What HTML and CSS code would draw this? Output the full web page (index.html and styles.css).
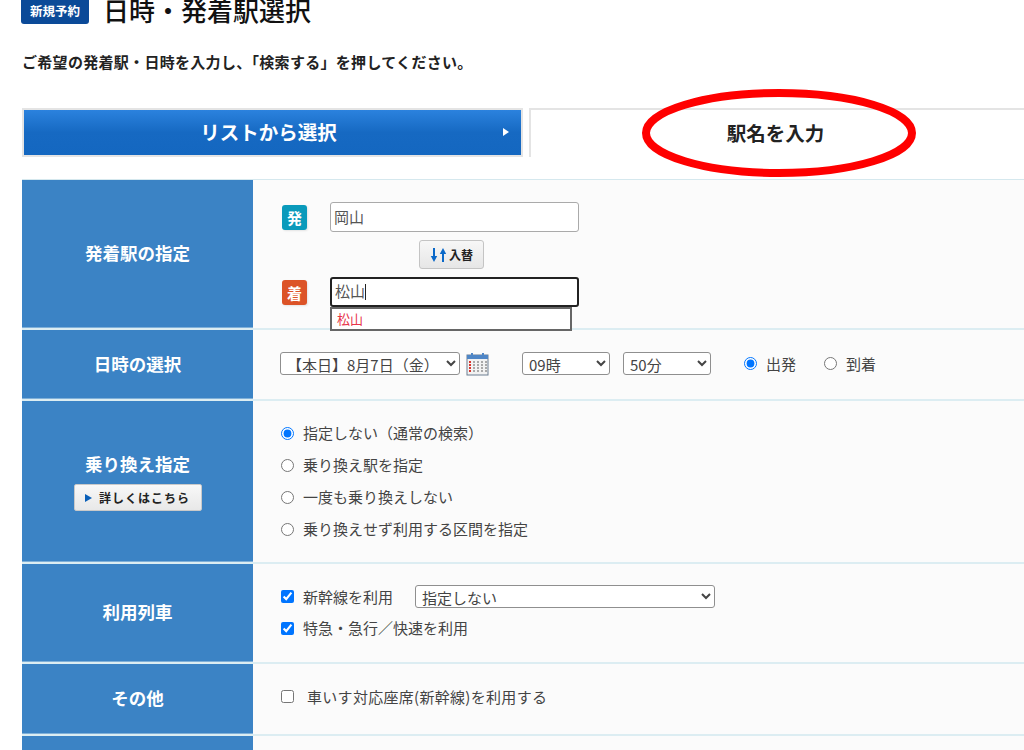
FILE: index.html
```html
<!DOCTYPE html>
<html lang="ja">
  <head>
    <meta charset="UTF-8" />
    <meta name="viewport" content="width=device-width, initial-scale=1.0" />
    <title>日時・発着駅選択</title>
    <link rel="stylesheet" href="styles.css">
  </head>
  <body>
    <div class="page">
      <div class="heading">
        <span class="badge">新規予約</span>
        <h1>日時・発着駅選択</h1>
      </div>
      <p class="lead">ご希望の発着駅・日時を入力し、「検索する」を押してください。</p>

      <div class="tabs">
        <div class="tab tab-list">リストから選択<span class="tab-arrow"></span></div>
        <div class="tab tab-name">駅名を入力</div>
      </div>

      <div class="form">
        <div class="row row-station">
          <div class="label">発着駅の指定</div>
          <div class="cell station">
            <div class="station-line">
              <span class="mark mark-dep">発</span>
              <input class="station-input" type="text" value="岡山">
            </div>
            <button class="swap" type="button">
              <svg width="18" height="16" viewBox="0 0 18 16"><path d="M4 1v9M13 15V6" stroke="#0a68c8" stroke-width="2"/><path d="M.8 9h6.400L4 15zM9.800 7h6.400L13 1z" fill="#0a68c8"/></svg>
              入替
            </button>
            <div class="station-line station-line-arr">
              <span class="mark mark-arr">着</span>
              <div class="suggest-wrap">
                <div class="station-input is-focus">松山<span class="caret"></span></div>
                <div class="suggest">松山</div>
              </div>
            </div>
          </div>
        </div>

        <div class="row row-date">
          <div class="label">日時の選択</div>
          <div class="cell date">
            <select class="select select-day"><option>【本日】8月7日（金）</option></select>
            <svg class="calendar" width="24" height="24" viewBox="0 0 24 24">
              <rect x="1" y="3" width="21" height="20" fill="#f2f2f2" stroke="#6d7f92"/>
              <rect x="1" y="3" width="21" height="4" fill="#4f86c6"/>
              <path d="M6 1v4M17 1v4" stroke="#4f86c6" stroke-width="2"/>
              <path d="M4 9v12M8 9v12M12 9v12M16 9v12M20 9v12" stroke="#a9a9a9" stroke-width="2" stroke-dasharray="2 1"/>
              <path d="M4 9v12" stroke="#d9342b" stroke-width="2" stroke-dasharray="2 1"/>
            </svg>
            <select class="select select-time"><option>09時</option></select>
            <select class="select select-time select-min"><option>50分</option></select>
            <label class="choice choice-dep"><input type="radio" name="kind" checked>出発</label>
            <label class="choice choice-arr"><input type="radio" name="kind">到着</label>
          </div>
        </div>

        <div class="row row-transfer">
          <div class="label label-transfer">
            乗り換え指定
            <button class="more" type="button"><span class="more-arrow"></span>詳しくはこちら</button>
          </div>
          <div class="cell options">
            <label class="choice"><input type="radio" name="transfer" checked>指定しない（通常の検索）</label>
            <label class="choice"><input type="radio" name="transfer">乗り換え駅を指定</label>
            <label class="choice"><input type="radio" name="transfer">一度も乗り換えしない</label>
            <label class="choice"><input type="radio" name="transfer">乗り換えせず利用する区間を指定</label>
          </div>
        </div>

        <div class="row row-train">
          <div class="label">利用列車</div>
          <div class="cell trains">
            <div class="train-line">
              <label class="choice"><input type="checkbox" checked>新幹線を利用</label>
              <select class="select select-train"><option>指定しない</option></select>
            </div>
            <label class="choice"><input type="checkbox" checked>特急・急行／快速を利用</label>
          </div>
        </div>

        <div class="row row-other">
          <div class="label">その他</div>
          <div class="cell other">
            <label class="choice choice-wide"><input type="checkbox">車いす対応座席(新幹線)を利用する</label>
          </div>
        </div>

        <div class="row row-last">
          <div class="label"></div>
          <div class="cell"></div>
        </div>
      </div>

      <svg class="circle" width="290" height="100" viewBox="0 0 290 100">
        <ellipse cx="145" cy="50" rx="133" ry="40" fill="none" stroke="#ff0000" stroke-width="8"/>
      </svg>
    </div>
  </body>
</html>
```

FILE: styles.css
```css
html,
body {
  margin: 0;
  height: 750px;
  overflow: hidden;
  background-color: #ffffff;
}
body {
  font-family: "Noto Sans CJK JP", "Liberation Sans", sans-serif;
  color: #333333;
}
.page {
  position: relative;
  width: 1024px;
  height: 750px;
  overflow: hidden;
  padding-left: 22px;
  box-sizing: border-box;
}

/* heading */
.heading {
  display: flex;
  align-items: center;
  height: 24px;
  margin-top: -1px;
}
.badge {
  display: flex;
  align-items: center;
  justify-content: center;
  width: 68px;
  height: 27px;
  margin-top: -1px;
  margin-left: -1px;
  background-color: #0b4a98;
  border-radius: 3px;
  color: #ffffff;
  font-size: 12.500px;
  font-weight: 700;
}
h1 {
  margin: -3px 0 0 14px;
  font-size: 26px;
  line-height: 28px;
  font-weight: 500;
  color: #111111;
}
.lead {
  margin: 29px 0 0 0;
  font-size: 15px;
  line-height: 20px;
  font-weight: 700;
  letter-spacing: 0.300px;
  color: #222222;
}

/* tabs */
.tabs {
  display: flex;
  margin-top: 36px;
  gap: 6px;
  width: 1100px;
}
.tab {
  display: flex;
  align-items: center;
  justify-content: center;
  box-sizing: border-box;
  height: 49px;
  padding-bottom: 3px;
  font-size: 19.500px;
  font-weight: 700;
}
.tab-list {
  position: relative;
  width: 501px;
  padding-right: 8px;
  background: linear-gradient(#2b82de, #1669c2 50%, #1467c0);
  border: 2px solid #e4e4e4;
  color: #ffffff;
}
.tab-arrow {
  position: absolute;
  right: 12px;
  top: 18px;
  border-left: 6px solid #ffffff;
  border-top: 4px solid transparent;
  border-bottom: 4px solid transparent;
}
.tab-name {
  flex: 1;
  padding-right: 102px;
  border-top: 2px solid #e4e4e4;
  border-left: 2px solid #e4e4e4;
  color: #222222;
}

/* form rows */
.form {
  margin-top: 22px;
  width: 1100px;
  border-top: 1px solid #d5e8ee;
}
.row {
  display: flex;
  border-bottom: 2px solid #dcedf2;
}
.label {
  display: flex;
  flex-direction: column;
  align-items: center;
  justify-content: center;
  box-sizing: border-box;
  width: 231px;
  flex-shrink: 0;
  padding-bottom: 3px;
  background-color: #3b83c5;
  box-shadow: inset 0 -1px 0 #7fb0d9;
  color: #ffffff;
  font-size: 17.500px;
  font-weight: 700;
}
.label-transfer {
  padding-bottom: 1px;
}
.cell {
  flex: 1;
  background-color: #fbfbfb;
  font-size: 15px;
  color: #444444;
}
.row-station { height: 148px; }
.row-date { height: 69px; }
.row-transfer { height: 161px; }
.row-train { height: 98px; }
.row-other { height: 70px; }
.row-last { height: 60px; }

/* station */
.station {
  position: relative;
  padding: 22px 0 0 29px;
}
.station-line {
  display: flex;
  align-items: center;
}
.station-line-arr {
  margin-top: 8px;
}
.mark {
  display: flex;
  align-items: center;
  justify-content: center;
  width: 25px;
  height: 25px;
  margin-right: 23px;
  border-radius: 3px;
  color: #ffffff;
  font-size: 15px;
  font-weight: 700;
  box-shadow: 1px 1px 2px #e4e4e4;
}
.mark-dep { background-color: #0a9abb; }
.mark-arr { background-color: #dc5327; }
.station-input {
  box-sizing: border-box;
  width: 249px;
  height: 30px;
  padding: 0 3px 2px;
  border: 1px solid #aaaaaa;
  border-radius: 3px;
  background-color: #ffffff;
  font-family: inherit;
  font-size: 15px;
  line-height: 24px;
  color: #555555;
}
.is-focus {
  border: 2px solid #222222;
}
.caret {
  display: inline-block;
  width: 1px;
  height: 16px;
  vertical-align: -3px;
  background-color: #222222;
}
.suggest-wrap {
  position: relative;
}
.suggest {
  position: absolute;
  left: 0;
  top: 30px;
  box-sizing: border-box;
  width: 242px;
  height: 24px;
  padding-left: 5px;
  border: 2px solid #666666;
  background-color: #ffffff;
  color: #e8344a;
  font-size: 13px;
  line-height: 20px;
  z-index: 1;
}
.swap {
  display: flex;
  align-items: center;
  justify-content: center;
  gap: 1px;
  width: 65px;
  height: 29px;
  margin: 8px 0 0 137px;
  padding: 0;
  border: 1px solid #c4c4c4;
  border-radius: 3px;
  background: linear-gradient(#f7f7f7, #e6e6e6);
  color: #222222;
  font-family: inherit;
  font-size: 12px;
  font-weight: 700;
}

/* selects and choices */
.select {
  box-sizing: border-box;
  height: 23px;
  padding: 0 2px;
  border: 1px solid #8f8f8f;
  border-radius: 3px;
  background-color: #ffffff;
  font-family: inherit;
  font-size: 15px;
  color: #444444;
}
.date {
  display: flex;
  align-items: center;
  padding: 0 0 2px 27px;
}
.select-day { width: 180px; }
.calendar { margin-left: 6px; }
.select-time {
  width: 88px;
  margin-left: 32px;
}
.select-min { margin-left: 13px; }
.choice {
  display: flex;
  align-items: center;
  font-size: 15px;
  line-height: 20px;
}
.choice input {
  margin: 0 9px 0 1px;
}
.choice-dep { margin-left: 32px; }
.choice-arr { margin-left: 27px; }
.options {
  display: flex;
  flex-direction: column;
  gap: 12px;
  padding: 22px 0 0 27px;
}
.trains {
  display: flex;
  flex-direction: column;
  gap: 10px;
  padding: 21px 0 0 27px;
}
.train-line {
  display: flex;
  align-items: center;
}
.select-train {
  width: 300px;
  margin-left: 22px;
}
.other {
  display: flex;
  align-items: center;
  padding: 0 0 5px 27px;
}
.choice-wide {
  letter-spacing: 0.300px;
}
.choice-wide input {
  margin-right: 13px;
}

/* more button */
.more {
  display: flex;
  align-items: center;
  justify-content: center;
  width: 128px;
  height: 27px;
  margin-top: 8px;
  padding: 0;
  border: 1px solid #c9c9c9;
  border-radius: 2px;
  background: linear-gradient(#f8f8f8, #e8e8e8);
  color: #222222;
  font-family: inherit;
  font-size: 12px;
  font-weight: 700;
  letter-spacing: 1px;
}
.more-arrow {
  margin-right: 7px;
  border-left: 7px solid #0a5fb8;
  border-top: 4px solid transparent;
  border-bottom: 4px solid transparent;
}

/* red hand-drawn circle over the tab */
.circle {
  position: absolute;
  left: 634px;
  top: 83px;
}
```
